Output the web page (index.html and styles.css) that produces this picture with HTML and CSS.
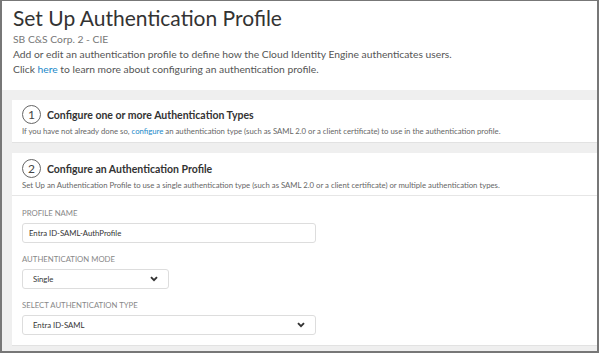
FILE: index.html
```html
<!DOCTYPE html>
<html>
<head>
    <meta charset="utf-8" />
    <title>Set Up Authentication Profile</title>
    <link rel="stylesheet" href="styles.css">
</head>

<body>
    <div class="frame">
        <div class="page-head">
            <h1>Set Up Authentication Profile</h1>
            <div class="tenant">SB C&amp;S Corp. 2 - CIE</div>
            <p>Add or edit an authentication profile to define how the Cloud Identity Engine authenticates users.</p>
            <p>Click <a href="#">here</a> to learn more about configuring an authentication profile.</p>
        </div>

        <div class="page-body">
            <div class="card">
                <div class="card-head">
                    <div class="step-title">
                        <span class="step-num">1</span>
                        <span>Configure one or more Authentication Types</span>
                    </div>
                    <div class="step-desc">If you have not already done so, <a href="#">configure</a> an authentication type (such as SAML 2.0 or a client certificate) to use in the authentication profile.</div>
                </div>
            </div>

            <div class="card">
                <div class="card-head bordered">
                    <div class="step-title">
                        <span class="step-num">2</span>
                        <span>Configure an Authentication Profile</span>
                    </div>
                    <div class="step-desc">Set Up an Authentication Profile to use a single authentication type (such as SAML 2.0 or a client certificate) or multiple authentication types.</div>
                </div>

                <div class="form">
                    <label>PROFILE NAME</label>
                    <div class="field wide">Entra ID-SAML-AuthProfile</div>

                    <label>AUTHENTICATION MODE</label>
                    <div class="field select narrow">
                        <span>Single</span>
                        <svg width="8" height="6" viewBox="0 0 8 6"><path d="M1 1.2 L4 4.2 L7 1.2" fill="none" stroke="#333" stroke-width="1.9"/></svg>
                    </div>

                    <label>SELECT AUTHENTICATION TYPE</label>
                    <div class="field select wide">
                        <span>Entra ID-SAML</span>
                        <svg width="8" height="6" viewBox="0 0 8 6"><path d="M1 1.2 L4 4.2 L7 1.2" fill="none" stroke="#333" stroke-width="1.9"/></svg>
                    </div>
                </div>
            </div>
        </div>
    </div>
</body>
</html>
```

FILE: styles.css
```css
* {
    margin: 0px;
    padding: 0px;
    box-sizing: border-box;
}

body {
    font-family: Lato, "Liberation Sans", sans-serif;
    color: #333;
    background: #fff;
}

a {
    color: #1a88c9;
    text-decoration: none;
}

.frame {
    width: 599px;
    height: 353px;
    border: 2px solid #777;
    border-top-width: 1px;
    overflow: hidden;
    display: flex;
    flex-direction: column;
}

.page-head {
    flex-shrink: 0;
    height: 89px;
    padding: 4px 10px 0px 11px;
    background: #fff;
}

.page-head h1 {
    font-size: 21px;
    font-weight: 400;
    color: #333;
    line-height: 26px;
}

.tenant {
    font-size: 10.3px;
    color: #777;
    line-height: 16px;
}

.page-head p {
    font-size: 10.3px;
    color: #555;
    line-height: 15px;
}

.page-body {
    flex: 1;
    background: #efefef;
    padding: 10px 0px 0px 10px;
    display: flex;
    flex-direction: column;
    gap: 10px;
}

.card {
    flex-shrink: 0;
    background: #fff;
    border-bottom: 1px solid #e2e2e2;
    margin-right: -10px;
}

.card-head {
    padding: 5px 10px 6px;
}

.card-head.bordered {
    padding: 6px 10px 5px;
    border-bottom: 1px solid #e6e6e6;
}

.step-title {
    display: flex;
    align-items: center;
    gap: 6px;
    font-size: 10.5px;
    font-weight: 700;
    color: #333;
}

.step-num {
    width: 19px;
    height: 19px;
    border: 1.5px solid #666;
    border-radius: 50%;
    display: flex;
    align-items: center;
    justify-content: center;
    font-size: 12px;
    font-weight: 400;
    color: #444;
}

.step-desc {
    margin-top: 2px;
    font-size: 7.75px;
    color: #666;
    line-height: 10px;
}

.form {
    padding: 12px 10px 10px;
    display: flex;
    flex-direction: column;
    align-items: flex-start;
}

.form label {
    font-size: 7.75px;
    color: #888;
    line-height: 10px;
    margin-bottom: 5px;
}

.field {
    height: 20px;
    border: 1px solid #ddd;
    border-radius: 3px;
    font-size: 7.75px;
    color: #333;
    padding: 0px 6px;
    display: flex;
    align-items: center;
    margin-bottom: 11px;
}

.field:last-child {
    margin-bottom: 0px;
}

.wide {
    width: 294px;
}

.narrow {
    width: 147px;
}

.select {
    justify-content: space-between;
    padding: 0px 10px 0px 10px;
}
```
